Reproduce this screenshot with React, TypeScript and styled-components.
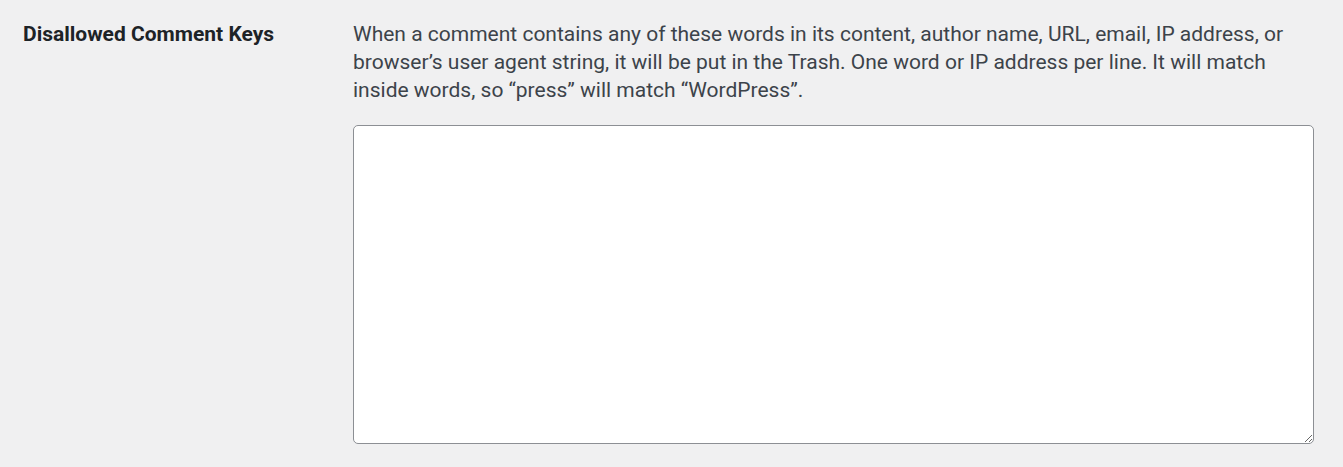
import React from 'react';
import styled, { createGlobalStyle } from 'styled-components';

const GlobalStyle = createGlobalStyle`
  html, body {
    margin: 0;
    padding: 0;
    background: #f0f0f1;
  }
  body {
    font-family: Roboto, "Liberation Sans", sans-serif;
    color: #3c434a;
  }
`;

const FormRow = styled.div`
  display: flex;
  align-items: flex-start;
  padding: 20px 0 0 23px;
  width: 1343px;
  height: 467px;
  box-sizing: border-box;
`;

const Label = styled.div`
  width: 330px;
  flex-shrink: 0;
  font-size: 21px;
  line-height: 28px;
  font-weight: 700;
  color: #1d2327;
`;

const Field = styled.div`
  display: flex;
  flex-direction: column;
  width: 961px;
`;

const Description = styled.p`
  margin: 0 0 21px;
  font-size: 21px;
  line-height: 28px;
  color: #3c434a;
`;

const KeysArea = styled.textarea`
  display: block;
  box-sizing: border-box;
  width: 961px;
  height: 319px;
  margin: 0;
  padding: 4px 10px;
  border: 1px solid #8c8f94;
  border-radius: 5px;
  background: #fff;
  font-family: "Liberation Mono", monospace;
  font-size: 17px;
  color: #2c3338;
  resize: vertical;
  outline: none;
`;

export default function App() {
  return (
    <>
      <GlobalStyle />
      <FormRow>
        <Label>Disallowed Comment Keys</Label>
        <Field>
          <Description>
            When a comment contains any of these words in its content, author name, URL, email, IP address, or
            browser’s user agent string, it will be put in the Trash. One word or IP address per line. It will match
            inside words, so “press” will match “WordPress”.
          </Description>
          <KeysArea aria-label="Disallowed Comment Keys" />
        </Field>
      </FormRow>
    </>
  );
}
